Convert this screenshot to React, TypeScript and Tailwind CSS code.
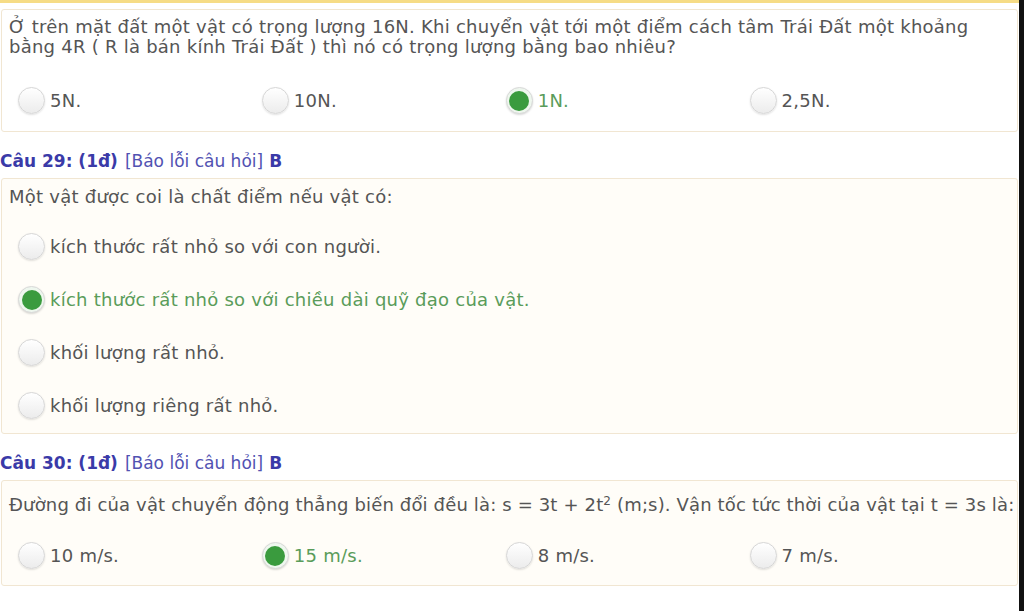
import type { ReactNode } from 'react';

type Opt = { label: ReactNode; checked?: boolean };

function Radio({ checked }: { checked?: boolean }) {
  if (checked) {
    return (
      <span className="flex h-[27px] w-[27px] shrink-0 items-center justify-center rounded-full border border-[#d9d9d9] bg-[#eef7ee] shadow-[0_1px_2px_rgba(0,0,0,0.15)]">
        <span className="h-[20px] w-[20px] rounded-full bg-[#3a9b3e]" />
      </span>
    );
  }
  return (
    <span className="h-[27px] w-[27px] shrink-0 rounded-full border border-[#d6d6d6] bg-gradient-to-b from-white to-[#ececec] shadow-[0_1px_2px_rgba(0,0,0,0.12)]" />
  );
}

function Option({ label, checked }: Opt) {
  return (
    <div className="flex items-center">
      <Radio checked={checked} />
      <span className={checked ? 'ml-[5px] text-[#5a9c5a]' : 'ml-[5px] text-[#555]'}>{label}</span>
    </div>
  );
}

function Heading({ num, top }: { num: number; top: string }) {
  return (
    <div className={`flex items-center pb-[7px] text-[17px] tracking-normal leading-[20px] ${top}`}>
      <span className="font-bold text-[#3a3aa8]">Câu {num}: (1đ)</span>
      <span className="ml-[7px] text-[#5252b2]">[Báo lỗi câu hỏi]</span>
      <span className="ml-[6px] font-bold text-[#3a3aa8]">B</span>
    </div>
  );
}

export default function App() {
  return (
    <div className="flex min-h-[611px] w-[1024px] bg-white font-['DejaVu_Sans',sans-serif] text-[18px] tracking-[0.25px] text-[#555]">
      <div className="flex-1">
        <div className="h-[3px] bg-[#f6dc86]" />
        <div className="mx-px mt-[6px] rounded-[3px] border border-[#f1e6d2] bg-white pl-[7px] pr-[3px] pt-[7px] pb-[17px]">
          <p className="leading-[20px]">
            Ở trên mặt đất một vật có trọng lượng 16N. Khi chuyển vật tới một điểm cách tâm Trái Đất một khoảng
            <br />
            bằng 4R ( R là bán kính Trái Đất ) thì nó có trọng lượng bằng bao nhiêu?
          </p>
          <div className="mt-[30px] grid grid-cols-4 pl-[9px] pr-[21px]">
            <Option label="5N." />
            <Option label="10N." />
            <Option label="1N." checked />
            <Option label="2,5N." />
          </div>
        </div>

        <Heading num={29} top="pt-[19px]" />
        <div className="mx-px rounded-[3px] border border-[#f1e6d2] bg-[#fffdf8] pl-[7px] pr-[3px] pt-[6px] pb-[14px]">
          <p className="leading-[24px]">Một vật được coi là chất điểm nếu vật có:</p>
          <div className="mt-[24px] flex flex-col gap-[26px] pl-[9px]">
            <Option label="kích thước rất nhỏ so với con người." />
            <Option label="kích thước rất nhỏ so với chiều dài quỹ đạo của vật." checked />
            <Option label="khối lượng rất nhỏ." />
            <Option label="khối lượng riêng rất nhỏ." />
          </div>
        </div>

        <Heading num={30} top="pt-[19px]" />
        <div className="mx-px rounded-[3px] border border-[#f1e6d2] bg-[#fffdf8] pl-[7px] pr-[3px] pt-[12px] pb-[16px]">
          <p className="whitespace-nowrap leading-[24px] tracking-[0.15px]">
            Đường đi của vật chuyển động thẳng biến đổi đều là: s = 3t + 2t<sup className="text-[12px]">2</sup> (m;s). Vận tốc tức thời của vật tại t = 3s là:
          </p>
          <div className="mt-[25px] grid grid-cols-4 pl-[9px] pr-[21px]">
            <Option label="10 m/s." />
            <Option label="15 m/s." checked />
            <Option label="8 m/s." />
            <Option label="7 m/s." />
          </div>
        </div>
      </div>
      <div className="w-[5px] bg-[#111]" />
    </div>
  );
}
